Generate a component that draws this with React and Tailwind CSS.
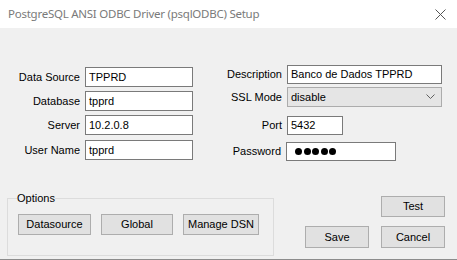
import React from "react";

const ui = { fontFamily: '"Liberation Sans", Arial, sans-serif' };

function Field({ label, labelW, value, w, h = "h-[20px]", mt = "" }) {
  return (
    <div className={`flex items-center ${mt}`}>
      <span className={`block ${labelW} text-right mr-[5px]`}>{label}</span>
      <div
        className={`${w} ${h} bg-white border border-[#7a7a7a] flex items-center pl-[3px] text-black`}
      >
        {value}
      </div>
    </div>
  );
}

function Btn({ children, w = "w-[73px]", h = "h-[21px]" }) {
  return (
    <button
      className={`${w} ${h} bg-[#e1e1e1] border border-[#adadad] text-black text-[11px] leading-none flex items-center justify-center`}
    >
      {children}
    </button>
  );
}

export default function App() {
  return (
    <div
      className="w-[457px] h-[260px] flex flex-col bg-[#f0f0f0] text-[11px] text-black overflow-hidden"
      style={ui}
    >
      {/* Title bar */}
      <div className="h-[28px] bg-white flex items-center justify-between pl-[8px] pr-[11px] shrink-0">
        <span
          className="text-[11.5px] text-[#7a7a7a] tracking-[-0.25px]"
          style={{ fontFamily: '"Noto Sans", "Open Sans", sans-serif' }}
        >
          PostgreSQL ANSI ODBC Driver (psqlODBC) Setup
        </span>
        <svg width="11" height="11" viewBox="0 0 11 11" className="mt-[1px]">
          <path d="M0.5 0.5 L10.5 10.5 M10.5 0.5 L0.5 10.5" stroke="#555" strokeWidth="1" fill="none" />
        </svg>
      </div>

      {/* Body */}
      <div className="flex-1 flex flex-col border-b border-[#8c8c8c]">
        {/* Fields */}
        <div className="flex mt-[37px]">
          <div className="flex flex-col w-[225px]">
            <Field label="Data Source" labelW="w-[80px]" value="TPPRD" w="w-[108px]" mt="mt-[2px]" />
            <Field label="Database" labelW="w-[80px]" value="tpprd" w="w-[108px]" mt="mt-[4px]" />
            <Field label="Server" labelW="w-[80px]" value="10.2.0.8" w="w-[108px]" mt="mt-[4px]" />
            <Field label="User Name" labelW="w-[80px]" value="tpprd" w="w-[108px]" mt="mt-[5px]" />
          </div>
          <div className="flex flex-col">
            <Field label="Description" labelW="w-[57px]" value="Banco de Dados TPPRD" w="w-[155px]" h="h-[19px]" />
            <div className="flex items-center mt-[3px]">
              <span className="block w-[57px] text-right mr-[5px]">SSL Mode</span>
              <div className="w-[155px] h-[20px] bg-[#e5e5e5] border border-[#acacac] flex items-center justify-between pl-[3px] pr-[6px]">
                <span>disable</span>
                <svg width="9" height="6" viewBox="0 0 9 6">
                  <path d="M0.5 0.5 L4.5 4.5 L8.5 0.5" stroke="#606060" strokeWidth="1" fill="none" />
                </svg>
              </div>
            </div>
            <Field label="Port" labelW="w-[57px]" value="5432" w="w-[56px]" h="h-[19px]" mt="mt-[9px]" />
            <div className="flex items-center mt-[7px]">
              <span className="block w-[56px] text-right mr-[5px]">Password</span>
              <div className="w-[110px] h-[19px] bg-white border border-[#7a7a7a] flex items-center gap-[1.5px] pl-[8px]">
                {[0, 1, 2, 3, 4].map((i) => (
                  <span key={i} className="w-[7px] h-[7px] rounded-full bg-black" />
                ))}
              </div>
            </div>
          </div>
        </div>

        {/* Bottom */}
        <div className="flex mt-[30px]">
          <fieldset className="ml-[7px] w-[267px] border border-[#dcdcdc] px-[10px] pb-[20px]">
            <legend className="leading-[14px] px-0 -ml-[1px]">Options</legend>
            <div className="flex mt-[9px]">
              <Btn>Datasource</Btn>
              <div className="ml-[10px]">
                <Btn w="w-[72px]">Global</Btn>
              </div>
              <div className="ml-[10px]">
                <Btn w="w-[76px]">Manage DSN</Btn>
              </div>
            </div>
          </fieldset>
          <div className="flex-1 flex flex-col items-end pr-[12px] mt-[5px]">
            <Btn w="w-[64px]">Test</Btn>
            <div className="flex mt-[9px] gap-[12px]">
              <Btn w="w-[64px]" h="h-[22px]">Save</Btn>
              <Btn w="w-[64px]" h="h-[22px]">Cancel</Btn>
            </div>
          </div>
        </div>
      </div>
    </div>
  );
}
